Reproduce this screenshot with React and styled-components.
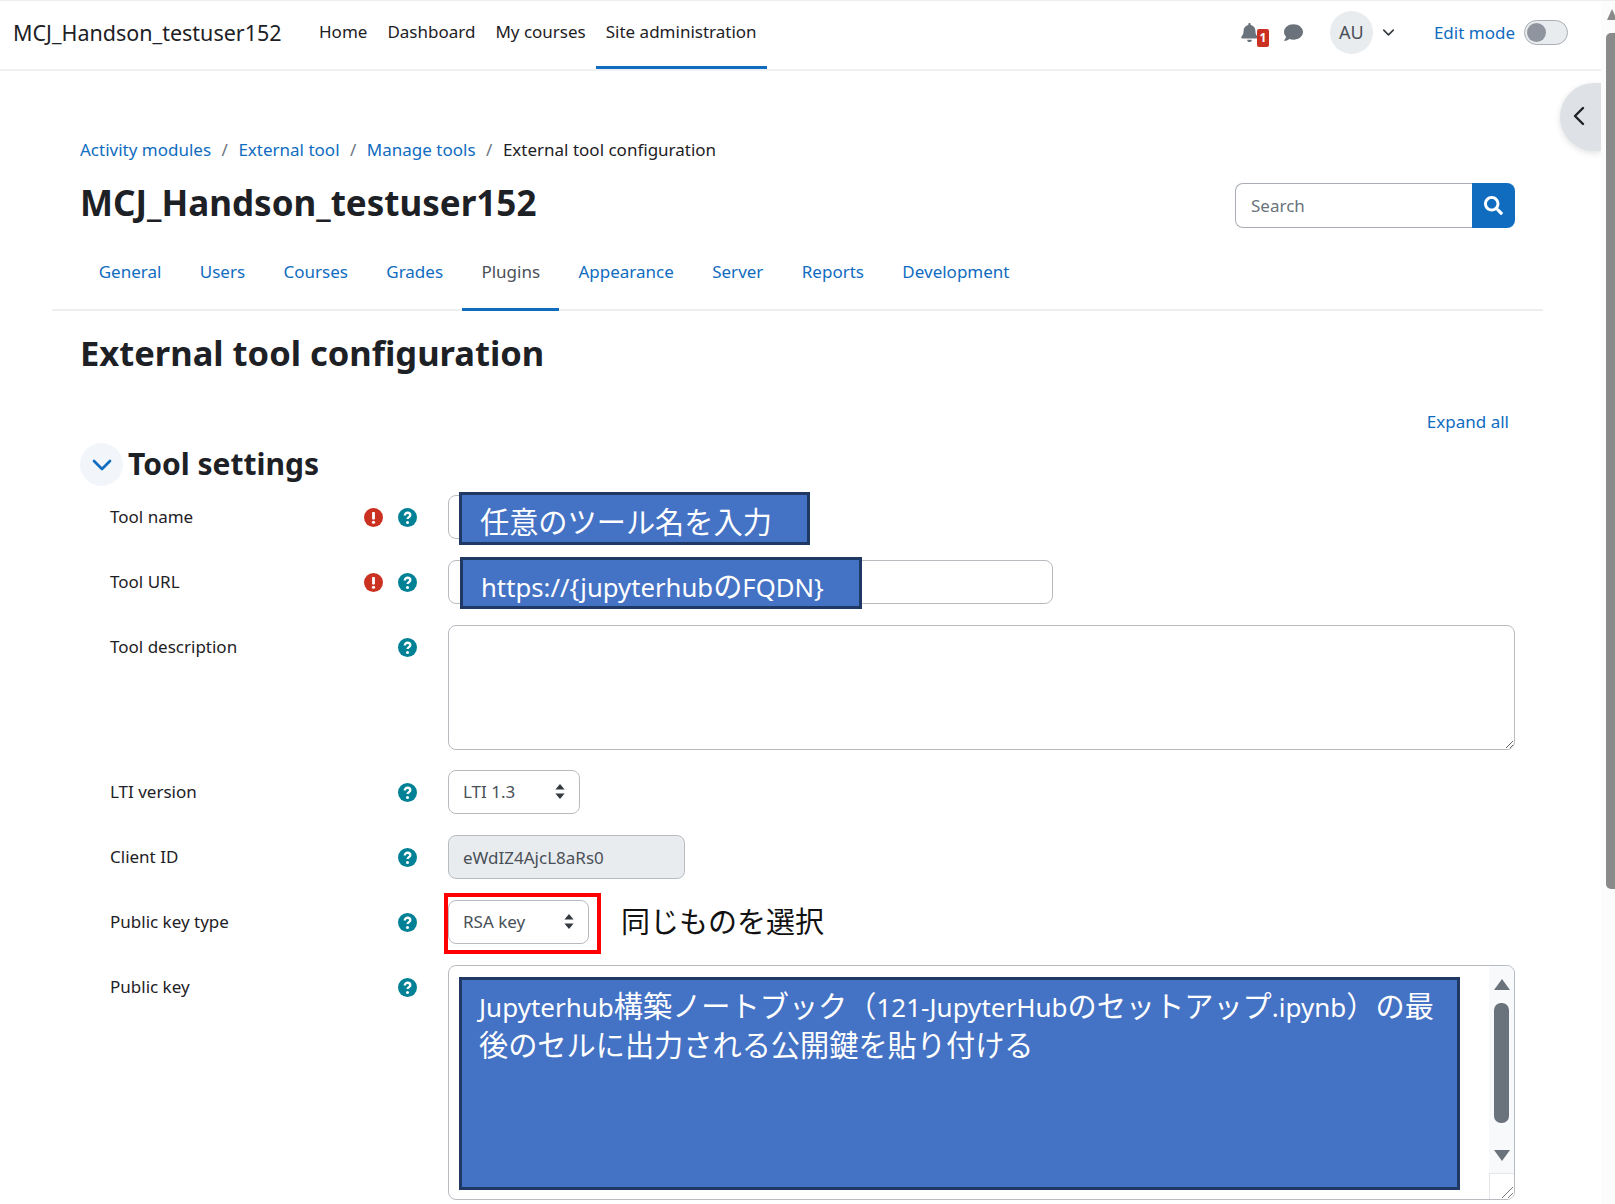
import React from "react";
import styled, { createGlobalStyle } from "styled-components";
import { FaBell, FaComment, FaSearch } from "react-icons/fa";
import { ChevronDown, ChevronLeft } from "lucide-react";

const Global = createGlobalStyle`
  html, body { margin: 0; padding: 0; background: #fff; }
  body {
    font-family: "Noto Sans", "Noto Sans CJK JP", sans-serif;
    color: #1d2125;
    font-size: 17px;
  }
  * { box-sizing: border-box; }
`;

const Page = styled.div`
  position: relative;
  width: 1615px;
  height: 1204px;
  overflow: hidden;
  border-top: 1px solid #eceef0;
`;

/* top bar */
const Nav = styled.nav`
  display: flex;
  align-items: stretch;
  height: 70px;
  padding: 0 47px 0 13px;
  border-bottom: 2px solid #f0f1f3;
`;
const Brand = styled.div`
  display: flex;
  align-items: center;
  font-size: 21.5px;
  width: 296px;
  padding-bottom: 6px;
`;
const NavItem = styled.div`
  display: flex;
  align-items: center;
  padding: 0 10px 5px;
  border-bottom: 3px solid ${(p) => (p.$active ? "#0f6cbf" : "transparent")};
`;
const NavRight = styled.div`
  display: flex;
  align-items: center;
  margin-left: auto;
  padding-bottom: 6px;
`;
const IconButton = styled.div`
  position: relative;
  display: flex;
  color: #6a737b;
  font-size: 19px;
  margin-right: ${(p) => p.$gap}px;
`;
const Badge = styled.span`
  position: absolute;
  left: 17px;
  top: 6px;
  width: 12px;
  height: 18px;
  border-radius: 2px;
  background: #ca3120;
  color: #fff;
  font-size: 12px;
  font-weight: 700;
  line-height: 18px;
  text-align: center;
`;
const Avatar = styled.div`
  display: flex;
  align-items: center;
  justify-content: center;
  width: 43px;
  height: 43px;
  border-radius: 50%;
  background: #e9ecef;
  color: #495057;
  font-size: 18px;
  margin-right: 6px;
`;
const EditMode = styled.span`
  color: #0f6cbf;
  margin: 0 9px 0 36px;
`;
const Switch = styled.div`
  position: relative;
  width: 44px;
  height: 25px;
  border-radius: 13px;
  border: 1px solid #a9aeb4;
  background: #e9ecef;
  &::after {
    content: "";
    position: absolute;
    left: 2px;
    top: 2px;
    width: 19px;
    height: 19px;
    border-radius: 50%;
    background: #8f959e;
  }
`;

/* overlays at the window edge */
const Drawer = styled.div`
  position: absolute;
  left: 1560px;
  top: 82px;
  width: 41px;
  height: 68px;
  display: flex;
  align-items: center;
  padding: 0 0 3px 3px;
  background: #dee2e6;
  border-radius: 34px 0 0 34px;
  box-shadow: 0 2px 6px rgba(0, 0, 0, 0.12);
  color: #1d2125;
`;
const PageScroll = styled.div`
  position: absolute;
  right: 0;
  top: 0;
  bottom: 0;
  width: 14px;
  background: #fcfcfc;
`;
const PageThumb = styled.div`
  position: absolute;
  left: 5px;
  right: 0;
  top: 32px;
  height: 856px;
  border-radius: 5px 0 0 5px;
  background: #8a8a8a;
`;
const PageArrow = styled.div`
  position: absolute;
  left: 6px;
  top: 8px;
  border-left: 5px solid transparent;
  border-right: 5px solid transparent;
  border-bottom: 11px solid #8a8a8a;
`;

/* page body */
const Main = styled.main`
  width: 1543px;
  padding: 63px 0 0 52px;
`;
const Indent = styled.div`
  padding: 0 28px;
`;
const Breadcrumb = styled.div`
  display: flex;
  align-items: center;
  height: 30px;
  padding-left: 28px;
`;
const Crumb = styled.span`
  color: ${(p) => (p.$current ? "#1d2125" : "#0f6cbf")};
`;
const CrumbSep = styled.span`
  color: #6a737b;
  margin: 0 10.5px;
`;
const HeadRow = styled.div`
  display: flex;
  align-items: center;
  justify-content: space-between;
  height: 45px;
  margin-top: 19px;
  padding: 0 28px;
`;
const SiteTitle = styled.h1`
  margin: 0 0 6px;
  font-size: 35px;
  font-weight: 700;
`;
const Search = styled.div`
  display: flex;
  width: 280px;
  height: 45px;
`;
const SearchField = styled.div`
  flex: 1;
  display: flex;
  align-items: center;
  padding-left: 15px;
  color: #6a737b;
  border: 1px solid #a9aeb4;
  border-right: 0;
  border-radius: 8px 0 0 8px;
`;
const SearchBtn = styled.div`
  width: 43px;
  display: flex;
  align-items: center;
  justify-content: center;
  background: #0f6cbf;
  color: #fff;
  font-size: 19px;
  border-radius: 0 8px 8px 0;
`;
const Tabs = styled.div`
  display: flex;
  height: 77px;
  margin-top: 6px;
  padding-left: 27.5px;
  border-bottom: 2px solid #eceef0;
`;
const Tab = styled.div`
  display: flex;
  align-items: center;
  padding: 0 19.2px;
  color: ${(p) => (p.$active ? "#495057" : "#0f6cbf")};
  border-bottom: 3px solid ${(p) => (p.$active ? "#0f6cbf" : "transparent")};
  margin-bottom: -2px;
`;
const PageTitle = styled.h2`
  margin: 21px 0 0;
  height: 42px;
  line-height: 42px;
  font-size: 34.5px;
  font-weight: 700;
`;
const ExpandRow = styled.div`
  display: flex;
  justify-content: flex-end;
  height: 30px;
  line-height: 30px;
  margin: 33px 6px 0 0;
  color: #0f6cbf;
`;
const Section = styled.div`
  display: flex;
  align-items: center;
  gap: 5px;
  height: 43px;
  margin-top: 6px;
`;
const Collapse = styled.div`
  display: flex;
  align-items: center;
  justify-content: center;
  width: 43px;
  height: 43px;
  border-radius: 50%;
  background: #f2f6fb;
  color: #0f6cbf;
`;
const SectionTitle = styled.h3`
  margin: 0 0 3px;
  font-size: 30px;
  font-weight: 700;
`;

/* form */
const Form = styled.div`
  display: flex;
  flex-direction: column;
  gap: 21px;
  margin-top: 9px;
`;
const Row = styled.div`
  display: grid;
  grid-template-columns: 247px 91px 1fr;
  padding-left: 30px;
`;
const Label = styled.div`
  height: 44px;
  line-height: 44px;
`;
const Icons = styled.div`
  display: grid;
  grid-template-columns: 34px 34px;
  height: 44px;
  margin-left: -1px;
  align-items: center;
  justify-items: center;
`;
const StatusIcon = styled.svg`
  width: 19px;
  height: 19px;
  grid-column: ${(p) => p.$col};
`;
const ReqIcon = () => (
  <StatusIcon $col={1} viewBox="0 0 24 24">
    <circle cx="12" cy="12" r="12" fill="#ca3120" />
    <rect x="10.2" y="5" width="3.6" height="9.5" rx="1" fill="#fff" />
    <circle cx="12" cy="18" r="2" fill="#fff" />
  </StatusIcon>
);
const HelpIcon = () => (
  <StatusIcon $col={2} viewBox="0 0 24 24">
    <circle cx="12" cy="12" r="12" fill="#008196" />
    <path d="M8.6 9.4c0-2 1.5-3.4 3.5-3.4s3.4 1.2 3.4 3c0 2.6-3.4 2.5-3.4 5" fill="none" stroke="#fff" strokeWidth="3" />
    <circle cx="12" cy="18.2" r="1.9" fill="#fff" />
  </StatusIcon>
);
const Control = styled.div`
  position: relative;
`;
const TextBox = styled.input`
  display: block;
  width: ${(p) => p.$w}px;
  height: 44px;
  padding: 0 14px;
  font: inherit;
  color: #495057;
  background: ${(p) => (p.$disabled ? "#e9ecef" : "#fff")};
  border: 1px solid #b8bcc1;
  border-radius: 8px;
  outline: none;
`;
const Area = styled.textarea`
  display: block;
  width: 1067px;
  height: 125px;
  margin-bottom: -1px;
  border: 1px solid #b8bcc1;
  border-radius: 8px;
  outline: none;
  resize: vertical;
`;
const Select = styled.div`
  display: flex;
  align-items: center;
  justify-content: space-between;
  width: ${(p) => p.$w}px;
  height: 44px;
  padding: 0 14px 2px;
  color: #495057;
  border: 1px solid #b8bcc1;
  border-radius: 8px;
`;
const KeyArea = styled.div`
  display: flex;
  justify-content: flex-end;
  width: 1067px;
  height: 235px;
  border: 1px solid #b8bcc1;
  border-radius: 8px;
  overflow: hidden;
`;
const ScrollCol = styled.div`
  display: flex;
  flex-direction: column;
  align-items: center;
  width: 25px;
  background: #f8f9fa;
`;
const ArrowUp = styled.div`
  margin-top: 13px;
  border-left: 8px solid transparent;
  border-right: 8px solid transparent;
  border-bottom: 11px solid #6a737b;
`;
const ArrowDown = styled.div`
  margin-top: 27px;
  border-left: 8px solid transparent;
  border-right: 8px solid transparent;
  border-top: 11px solid #6a737b;
`;
const Thumb = styled.div`
  width: 15px;
  height: 120px;
  margin-top: 13px;
  border-radius: 7px;
  background: #6a737b;
`;
const Corner = styled.div`
  display: flex;
  align-items: flex-end;
  justify-content: flex-end;
  width: 100%;
  flex: 1;
  margin-top: 12px;
  background: #fff;
  border-top: 1px solid #e4e6e8;
  border-left: 1px solid #e4e6e8;
`;

/* annotations laid over the screenshot */
const Note = styled.div`
  position: absolute;
  left: ${(p) => p.$l}px;
  top: ${(p) => p.$t}px;
  width: ${(p) => p.$w}px;
  height: ${(p) => p.$h}px;
  padding: ${(p) => p.$pad};
  background: #4472c4;
  border: 3px solid #203864;
  color: #fff;
  font-size: ${(p) => p.$size}px;
  line-height: 38px;
`;
const Latin = styled.span`
  font-size: ${(p) => p.$size || 26}px;
`;
const RedFrame = styled.div`
  position: absolute;
  left: -4px;
  top: -7px;
  width: 157px;
  height: 61px;
  border: 4px solid #f00;
`;
const Callout = styled.div`
  position: absolute;
  left: 173px;
  top: 0;
  height: 44px;
  line-height: 44px;
  font-size: 29px;
  color: #111;
  white-space: nowrap;
`;

const Caret = () => (
  <svg width="10" height="15" viewBox="0 0 10 15" fill="#343a40">
    <path d="M5 0l4.6 5.6H.4zM5 15L.4 9.4h9.2z" />
  </svg>
);

const Grip = () => (
  <svg width="14" height="14" viewBox="0 0 14 14" stroke="#777" fill="none">
    <path d="M2 13L13 2M8 13l5-5" />
  </svg>
);

function FieldRow({ label, required, children }) {
  return (
    <Row>
      <Label>{label}</Label>
      <Icons>
        {required && <ReqIcon />}
        <HelpIcon />
      </Icons>
      {children}
    </Row>
  );
}

const navItems = ["Home", "Dashboard", "My courses"];
const tabs = ["General", "Users", "Courses", "Grades", "Plugins", "Appearance", "Server", "Reports", "Development"];

export default function App() {
  return (
    <Page>
      <Global />
      <Nav>
        <Brand>MCJ_Handson_testuser152</Brand>
        {navItems.map((n) => (
          <NavItem key={n}>{n}</NavItem>
        ))}
        <NavItem $active>Site administration</NavItem>
        <NavRight>
          <IconButton $gap={25}>
            <FaBell />
            <Badge>1</Badge>
          </IconButton>
          <IconButton $gap={27}>
            <FaComment />
          </IconButton>
          <Avatar>AU</Avatar>
          <ChevronDown size={19} color="#343a40" strokeWidth={2} />
          <EditMode>Edit mode</EditMode>
          <Switch />
        </NavRight>
      </Nav>

      <Drawer>
        <ChevronLeft size={32} strokeWidth={1.8} />
      </Drawer>
      <PageScroll>
        <PageArrow />
        <PageThumb />
      </PageScroll>

      <Main>
        <Breadcrumb>
          <Crumb>Activity modules</Crumb>
          <CrumbSep>/</CrumbSep>
          <Crumb>External tool</Crumb>
          <CrumbSep>/</CrumbSep>
          <Crumb>Manage tools</Crumb>
          <CrumbSep>/</CrumbSep>
          <Crumb $current>External tool configuration</Crumb>
        </Breadcrumb>
        <HeadRow>
          <SiteTitle>MCJ_Handson_testuser152</SiteTitle>
          <Search>
            <SearchField>Search</SearchField>
            <SearchBtn>
              <FaSearch />
            </SearchBtn>
          </Search>
        </HeadRow>
        <Tabs>
          {tabs.map((t) => (
            <Tab key={t} $active={t === "Plugins"}>
              {t}
            </Tab>
          ))}
        </Tabs>
        <Indent>
          <PageTitle>External tool configuration</PageTitle>
          <ExpandRow>Expand all</ExpandRow>
          <Section>
            <Collapse>
              <ChevronDown size={32} strokeWidth={2} />
            </Collapse>
            <SectionTitle>Tool settings</SectionTitle>
          </Section>
          <Form>
            <FieldRow label="Tool name" required>
              <Control>
                <TextBox $w={300} readOnly />
                <Note $l={11} $t={-3} $w={351} $h={53} $size={29.2} $pad="8px 18px 0">任意のツール名を入力</Note>
              </Control>
            </FieldRow>
            <FieldRow label="Tool URL" required>
              <Control>
                <TextBox $w={605} readOnly />
                <Note $l={12} $t={-3} $w={402} $h={52} $size={29.2} $pad="7px 18px 0">
                  <Latin $size={25.7}>{"https://{jupyterhub"}</Latin>の<Latin $size={25.7}>{"FQDN}"}</Latin>
                </Note>
              </Control>
            </FieldRow>
            <FieldRow label="Tool description">
              <Control>
                <Area readOnly />
              </Control>
            </FieldRow>
            <FieldRow label="LTI version">
              <Control>
                <Select $w={132}>
                  LTI 1.3
                  <Caret />
                </Select>
              </Control>
            </FieldRow>
            <FieldRow label="Client ID">
              <Control>
                <TextBox $w={237} $disabled value="eWdIZ4AjcL8aRs0" readOnly />
              </Control>
            </FieldRow>
            <FieldRow label="Public key type">
              <Control>
                <Select $w={141}>
                  RSA key
                  <Caret />
                </Select>
                <RedFrame />
                <Callout>同じものを選択</Callout>
              </Control>
            </FieldRow>
            <FieldRow label="Public key">
              <Control>
                <KeyArea>
                  <ScrollCol>
                    <ArrowUp />
                    <Thumb />
                    <ArrowDown />
                    <Corner>
                      <Grip />
                    </Corner>
                  </ScrollCol>
                </KeyArea>
                <Note $l={11} $t={12} $w={1001} $h={213} $size={29.2} $pad="7px 17px">
                  <Latin>Jupyterhub</Latin>構築ノートブック（<Latin>121-JupyterHub</Latin>のセットアップ<Latin>.ipynb</Latin>）の最
                  <br />
                  後のセルに出力される公開鍵を貼り付ける
                </Note>
              </Control>
            </FieldRow>
          </Form>
        </Indent>
      </Main>
    </Page>
  );
}
